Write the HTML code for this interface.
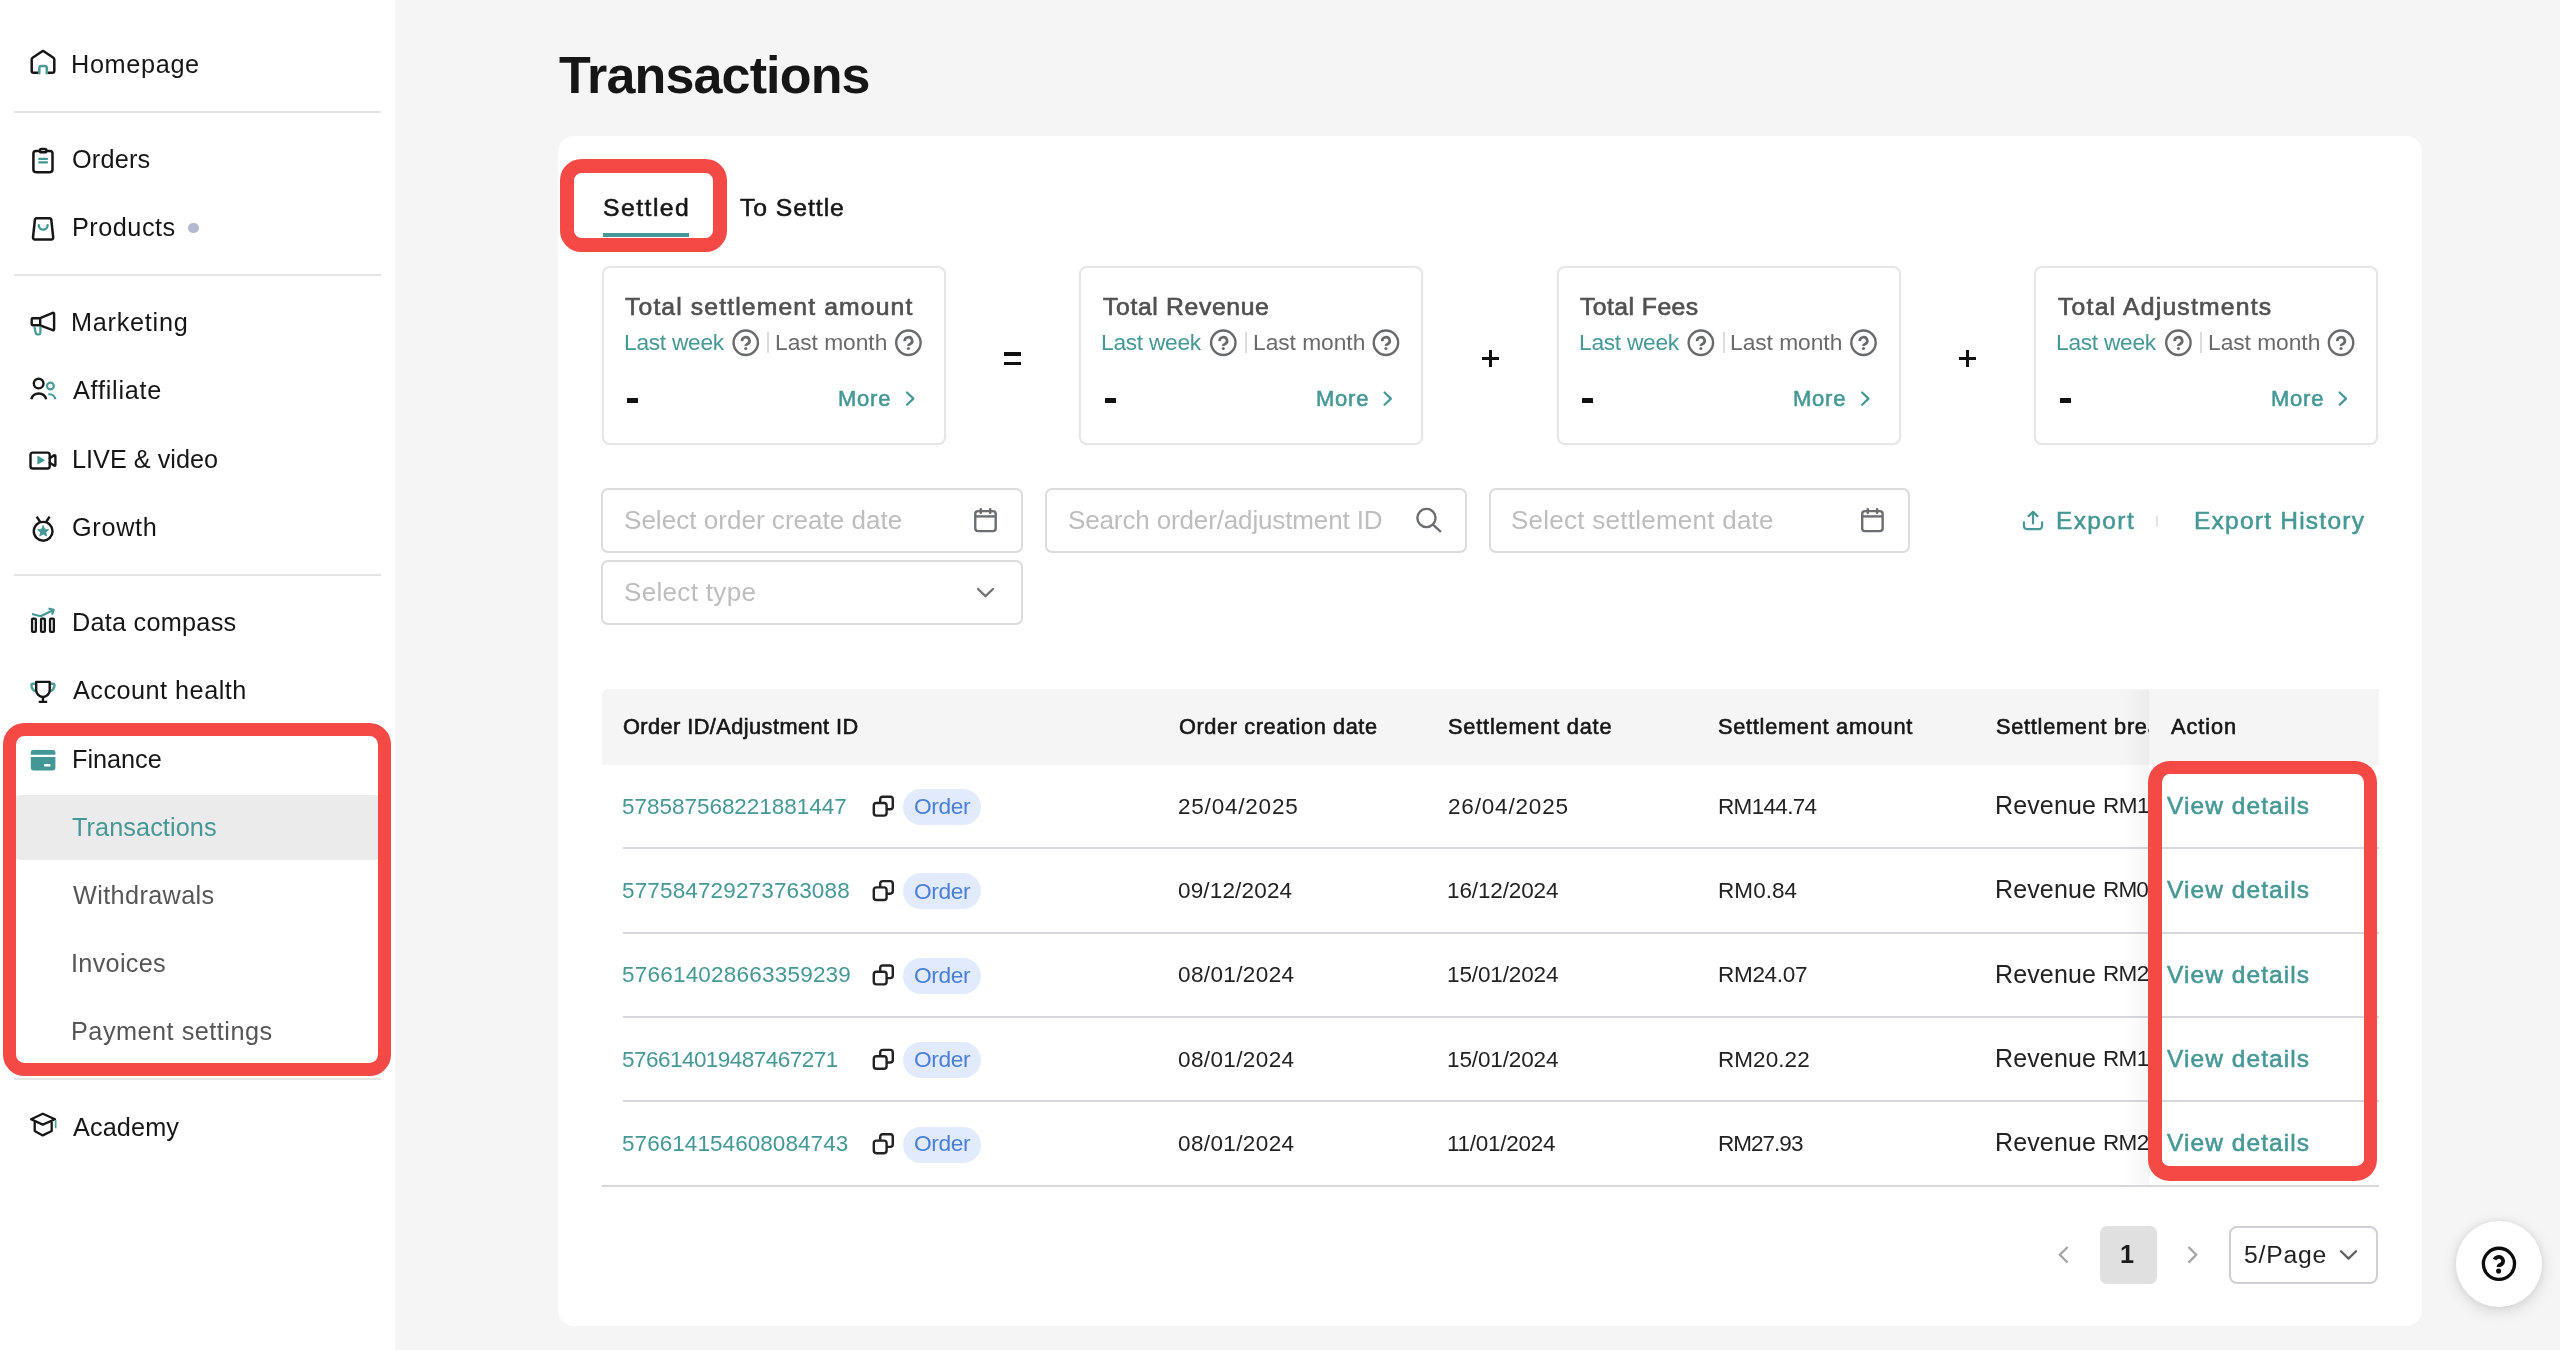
<!DOCTYPE html>
<html lang="en">
<head>
<meta charset="utf-8">
<title>Transactions</title>
<style>
*{box-sizing:border-box;margin:0;padding:0}
html,body{width:2560px;height:1350px;overflow:hidden;background:#f5f5f5}
body{position:relative;font-family:"Liberation Sans",sans-serif;color:#161616}
.a{position:absolute}
.t{position:absolute;white-space:nowrap;line-height:1;will-change:transform}
.hr{position:absolute;left:14.4px;width:366.2px;height:2px;background:#e5e5e6}
.stat{position:absolute;top:265.8px;width:344.2px;height:179.1px;border:2px solid #e6e6e6;border-radius:8px;background:#fff;box-shadow:0 0 3px rgba(0,0,0,.05)}
.inp{position:absolute;width:421.6px;height:65px;border:2px solid #dcdcdc;border-radius:7px;background:#fff}
.dash{position:absolute;top:398px;width:11px;height:5px;background:#111;border-radius:.5px}
.vsep{position:absolute;top:332.3px;width:2px;height:21.2px;background:#dcdcdc}
.rsep{position:absolute;left:623px;width:1755.6px;height:2px;background:#d6d8dc}
.badge{position:absolute;left:903px;width:78px;height:36px;border-radius:18px;background:#e2ebfd}
.red{position:absolute;border:13.7px solid #f54946;border-radius:21.5px}
.clip{position:absolute;overflow:hidden}
</style>
</head>
<body>
<!-- sidebar -->
<div class="a" style="left:0;top:0;width:395px;height:1350px;background:#fff"></div>
<div class="hr" style="top:111px"></div>
<div class="hr" style="top:274.4px"></div>
<div class="hr" style="top:574.2px"></div>
<div class="hr" style="top:1078.4px"></div>
<div class="a" style="left:14.4px;top:795.4px;width:366.2px;height:64.2px;background:#ebebeb;border-radius:6px"></div>
<div class="a" style="left:188.2px;top:222.6px;width:10.8px;height:10.8px;border-radius:50%;background:#b3b7d0"></div>

<!-- main card -->
<div class="a" style="left:557.8px;top:135.8px;width:1863.8px;height:1190.6px;background:#fff;border-radius:16px"></div>
<div class="a" style="left:603px;top:233.2px;width:86.4px;height:3.6px;background:#439794"></div>

<!-- stat cards -->
<div class="stat" style="left:601.5px"></div>
<div class="stat" style="left:1079.05px"></div>
<div class="stat" style="left:1556.6px"></div>
<div class="stat" style="left:2034.15px"></div>
<div class="vsep" style="left:767.40px"></div>
<div class="dash" style="left:627.00px"></div>
<div class="vsep" style="left:1244.95px"></div>
<div class="dash" style="left:1104.55px"></div>
<div class="vsep" style="left:1722.50px"></div>
<div class="dash" style="left:1582.10px"></div>
<div class="vsep" style="left:2200.05px"></div>
<div class="dash" style="left:2059.65px"></div>
<!-- operators -->
<div class="a" style="left:1004px;top:352.4px;width:17px;height:3.2px;background:#111"></div>
<div class="a" style="left:1004px;top:362px;width:17px;height:3.2px;background:#111"></div>
<div class="a" style="left:1482px;top:356.9px;width:16.8px;height:3.5px;background:#111"></div>
<div class="a" style="left:1488.55px;top:350.2px;width:3.5px;height:16.9px;background:#111"></div>
<div class="a" style="left:1959px;top:356.9px;width:16.8px;height:3.5px;background:#111"></div>
<div class="a" style="left:1965.55px;top:350.2px;width:3.5px;height:16.9px;background:#111"></div>

<!-- filters -->
<div class="inp" style="left:601.4px;top:488px"></div>
<div class="inp" style="left:1045.2px;top:488px"></div>
<div class="inp" style="left:1488.8px;top:488px"></div>
<div class="inp" style="left:601.4px;top:560.1px"></div>
<div class="a" style="left:2156.4px;top:515.6px;width:1.6px;height:10px;background:#e4e4e4"></div>

<!-- table -->
<div class="a" style="left:601.6px;top:688.8px;width:1777.2px;height:76.2px;background:#f5f5f5;border-radius:6px 0 0 0"></div>
<div class="rsep" style="top:847.2px"></div>
<div class="rsep" style="top:931.6px"></div>
<div class="rsep" style="top:1016px"></div>
<div class="rsep" style="top:1100.4px"></div>
<div class="rsep" style="top:1184.8px;left:601.6px;width:1777px"></div>
<div class="badge" style="top:789.00px"></div>
<div class="badge" style="top:873.40px"></div>
<div class="badge" style="top:957.80px"></div>
<div class="badge" style="top:1042.20px"></div>
<div class="badge" style="top:1126.60px"></div>
<!-- settlement breakdown column (clipped by fixed Action column) -->
<div class="clip" style="left:1990px;top:689.6px;width:158.6px;height:495px">
<div class="t" style="left:6.00px;top:26.10px;font-size:21.75px;letter-spacing:0.731px;color:#161616;-webkit-text-stroke:0.6px #161616">Settlement breakdown</div>
<div class="t" style="left:5.00px;top:103.40px;font-size:25.0px;letter-spacing:0.135px;color:#222">Revenue</div>
<div class="t" style="left:113.00px;top:105.30px;font-size:22.5px;letter-spacing:-0.528px;color:#222">RM160.82</div>
<div class="t" style="left:5.00px;top:187.70px;font-size:25.0px;letter-spacing:0.135px;color:#222">Revenue</div>
<div class="t" style="left:113.00px;top:189.60px;font-size:22.5px;letter-spacing:-0.814px;color:#222">RM0.93</div>
<div class="t" style="left:5.00px;top:272.00px;font-size:25.0px;letter-spacing:0.135px;color:#222">Revenue</div>
<div class="t" style="left:113.00px;top:273.90px;font-size:22.5px;letter-spacing:-0.647px;color:#222">RM26.74</div>
<div class="t" style="left:5.00px;top:356.30px;font-size:25.0px;letter-spacing:0.135px;color:#222">Revenue</div>
<div class="t" style="left:113.00px;top:358.20px;font-size:22.5px;letter-spacing:-0.647px;color:#222">RM16.04</div>
<div class="t" style="left:5.00px;top:440.60px;font-size:25.0px;letter-spacing:0.135px;color:#222">Revenue</div>
<div class="t" style="left:113.00px;top:442.50px;font-size:22.5px;letter-spacing:-0.647px;color:#222">RM23.10</div>
</div>
<div class="a" style="left:2124px;top:689.6px;width:24.6px;height:495.2px;background:linear-gradient(to right,rgba(0,0,0,0),rgba(0,0,0,.035))"></div>

<!-- pagination -->
<div class="a" style="left:2099.8px;top:1225.9px;width:57.2px;height:57.8px;border-radius:7px;background:#e0e0e0"></div>
<div class="a" style="left:2229px;top:1226.3px;width:149.2px;height:57.4px;border:2px solid #ced0d3;border-radius:8px;background:#fff"></div>

<!-- help button -->
<div class="a" style="left:2456px;top:1221px;width:85.6px;height:85.6px;border-radius:50%;background:#fff;box-shadow:0 4px 16px rgba(0,0,0,.13),0 0 6px rgba(0,0,0,.07)"></div>

<!-- icons -->
<svg class="a" style="left:0;top:0" width="2560" height="1350" viewBox="0 0 2560 1350" fill="none" stroke-linecap="round" stroke-linejoin="round">
<g stroke="#161616" stroke-width="2.5">
<!-- home -->
<path d="M38.2 72.800H33.500a1.800 1.800 0 0 1-1.800-1.800V59.400a2 2 0 0 1 .900-1.700L41.900 51.500a2 2 0 0 1 2.200 0L53.400 57.700a2 2 0 0 1 .900 1.700V71a1.800 1.800 0 0 1-1.800 1.800h-4.700"/>
<path d="M39.300 73.200V68.200a2.200 2.200 0 0 1 2.200-2.200h3.100a2.200 2.200 0 0 1 2.200 2.200v5" stroke="#4a9c99"/>
<!-- orders -->
<rect x="33.400" y="151" width="19.100" height="21.200" rx="2.600"/>
<rect x="39.900" y="148.900" width="6.500" height="3.400" rx="1.600" fill="#fff"/>
<path d="M39.300 158.900h7.700M39.300 162.400h7.700" stroke="#439794" stroke-width="2.200"/>
<!-- products -->
<path d="M36.900 218.250h12.600a1.800 1.800 0 0 1 1.800 1.600l1.900 17.500a1.850 1.850 0 0 1-1.850 2.050H34.850a1.850 1.850 0 0 1-1.850-2.050l1.900-17.500a1.800 1.800 0 0 1 1.800-1.600z"/>
<path d="M38.800 225.200a4.400 4.400 0 0 0 8.800 0" stroke="#439794" stroke-width="2.400"/>
<!-- marketing -->
<path d="M40.200 318.200L52.700 312.900a1 1 0 0 1 1.400 .900V329.300a1 1 0 0 1-1.400 .900L40.200 325.300" stroke-width="2.400"/>
<rect x="31.700" y="318.300" width="8.500" height="6.900" rx=".900" stroke-width="2.400"/>
<path d="M34.500 327.600l1.400 5.800a1.200 1.200 0 0 0 1.200 .900h2.100a1.200 1.200 0 0 0 1.200-1.200v-5.500" stroke="#4a9c99" stroke-width="2.300"/>
<!-- affiliate -->
<circle cx="38.650" cy="383.550" r="4.850" stroke-width="2.400"/>
<path d="M31.300 399.300a7.700 7.700 0 0 1 14.900 0" stroke-width="2.400" stroke-linecap="butt"/>
<circle cx="50.400" cy="386.050" r="3.400" stroke="#4a9c99" stroke-width="2.200"/>
<path d="M48.400 394.300a6.600 6.600 0 0 1 7.100 5" stroke="#4a9c99" stroke-width="2.200" stroke-linecap="butt"/>
<!-- live & video -->
<rect x="30.500" y="452.600" width="19.200" height="15.900" rx="2.300" stroke-width="2.400"/>
<path d="M49.700 458.200l4.400-2.900a.85.850 0 0 1 1.300.700v8.900a.85.850 0 0 1-1.300.700l-4.400-2.900" stroke-width="2.400"/>
<path d="M37.400 456.500a.5.500 0 0 1 .75-.43l6.300 3.700a.5.500 0 0 1 0 .860l-6.300 3.700a.5.500 0 0 1-.75-.43z" fill="#439794" stroke="none"/>
<!-- growth -->
<circle cx="43.150" cy="531.300" r="9.400" stroke-width="2.400"/>
<path d="M36.700 516.600l3.500 5.400M49.600 516.600l-3.500 5.400" stroke-width="2.400" stroke-linecap="butt"/>
<path d="M43.150 525.700l1.650 3.500 3.850.450-2.850 2.600.780 3.800-3.430-1.950-3.430 1.950.780-3.800-2.850-2.600 3.850-.450z" fill="#439794" stroke="#439794" stroke-width=".8"/>
<!-- data compass -->
<rect x="32.050" y="618.650" width="3.800" height="13.200" rx=".900" stroke-width="2.300"/>
<rect x="41.050" y="618.650" width="3.800" height="13.200" rx=".900" stroke-width="2.300"/>
<rect x="50.050" y="618.650" width="3.800" height="13.200" rx=".900" stroke-width="2.300"/>
<path d="M32 614l8.700 2.300 12.600-6.300M48.500 608.400l5.200 1.400-1.700 4.900" stroke="#439794" stroke-width="2.100" stroke-linecap="butt"/>
<!-- account health -->
<path d="M35.600 683.700h-2.800a1.400 1.400 0 0 0-1.400 1.500c.2 3.400 2 5.700 5 6.100M50.300 683.700h2.800a1.400 1.400 0 0 1 1.400 1.500c-.2 3.400-2 5.700-5 6.100" stroke="#4a9c99" stroke-width="2.400"/>
<path d="M36.200 681.900h13.500v8.300a6.750 6.750 0 0 1-13.500 0z" fill="#fff" stroke-width="2.400"/>
<path d="M42.950 697v4.500M38.700 701.900h8.500" stroke-width="2.400" stroke-linecap="butt"/>
<!-- academy -->
<path d="M42.800 1113.700l12.200 5.600-12.200 5.300-11.700-5.300z" stroke-width="2.300"/>
<path d="M34.700 1121.700v9.300l8.100 4.400 8.900-4.400v-9.300" stroke-width="2.300" stroke-linecap="butt"/>
<path d="M55.700 1120.300v8" stroke="#4a9c99" stroke-width="1.600" stroke-linecap="butt"/>
</g>
<!-- finance (filled) -->
<path d="M33.200 750h19.800a2.400 2.400 0 0 1 2.400 2.400v2.300H30.800v-2.300a2.400 2.400 0 0 1 2.400-2.400z" fill="#439794"/>
<path d="M30.800 757h24.600v11a2.400 2.400 0 0 1-2.400 2.400H33.200a2.400 2.400 0 0 1-2.400-2.400z" fill="#439794"/>
<rect x="44.200" y="763.900" width="6.200" height="2.700" rx=".6" fill="#fff"/>
<g transform="translate(745.75 342.75)" stroke="#686a6c" stroke-width="2.4"><circle r="12.2"/><g transform="scale(1.0)"><path d="M-3.7-1.7A3.75 3.6 0 1 1 1.7 1.3C.5 1.9-.1 2.3-.1 3.3" stroke-linecap="butt" stroke-width="2.69"/><circle cy="5.7" r="1.55" fill="#686a6c" stroke="none"/></g></g><g transform="translate(908.40 342.75)" stroke="#686a6c" stroke-width="2.4"><circle r="12.2"/><g transform="scale(1.0)"><path d="M-3.7-1.7A3.75 3.6 0 1 1 1.7 1.3C.5 1.9-.1 2.3-.1 3.3" stroke-linecap="butt" stroke-width="2.69"/><circle cy="5.7" r="1.55" fill="#686a6c" stroke="none"/></g></g><path d="M907.00 392.5l6.4 6.1-6.4 6.1" stroke="#459895" stroke-width="2.2"/><g transform="translate(1223.30 342.75)" stroke="#686a6c" stroke-width="2.4"><circle r="12.2"/><g transform="scale(1.0)"><path d="M-3.7-1.7A3.75 3.6 0 1 1 1.7 1.3C.5 1.9-.1 2.3-.1 3.3" stroke-linecap="butt" stroke-width="2.69"/><circle cy="5.7" r="1.55" fill="#686a6c" stroke="none"/></g></g><g transform="translate(1385.95 342.75)" stroke="#686a6c" stroke-width="2.4"><circle r="12.2"/><g transform="scale(1.0)"><path d="M-3.7-1.7A3.75 3.6 0 1 1 1.7 1.3C.5 1.9-.1 2.3-.1 3.3" stroke-linecap="butt" stroke-width="2.69"/><circle cy="5.7" r="1.55" fill="#686a6c" stroke="none"/></g></g><path d="M1384.55 392.5l6.4 6.1-6.4 6.1" stroke="#459895" stroke-width="2.2"/><g transform="translate(1700.85 342.75)" stroke="#686a6c" stroke-width="2.4"><circle r="12.2"/><g transform="scale(1.0)"><path d="M-3.7-1.7A3.75 3.6 0 1 1 1.7 1.3C.5 1.9-.1 2.3-.1 3.3" stroke-linecap="butt" stroke-width="2.69"/><circle cy="5.7" r="1.55" fill="#686a6c" stroke="none"/></g></g><g transform="translate(1863.50 342.75)" stroke="#686a6c" stroke-width="2.4"><circle r="12.2"/><g transform="scale(1.0)"><path d="M-3.7-1.7A3.75 3.6 0 1 1 1.7 1.3C.5 1.9-.1 2.3-.1 3.3" stroke-linecap="butt" stroke-width="2.69"/><circle cy="5.7" r="1.55" fill="#686a6c" stroke="none"/></g></g><path d="M1862.10 392.5l6.4 6.1-6.4 6.1" stroke="#459895" stroke-width="2.2"/><g transform="translate(2178.40 342.75)" stroke="#686a6c" stroke-width="2.4"><circle r="12.2"/><g transform="scale(1.0)"><path d="M-3.7-1.7A3.75 3.6 0 1 1 1.7 1.3C.5 1.9-.1 2.3-.1 3.3" stroke-linecap="butt" stroke-width="2.69"/><circle cy="5.7" r="1.55" fill="#686a6c" stroke="none"/></g></g><g transform="translate(2341.05 342.75)" stroke="#686a6c" stroke-width="2.4"><circle r="12.2"/><g transform="scale(1.0)"><path d="M-3.7-1.7A3.75 3.6 0 1 1 1.7 1.3C.5 1.9-.1 2.3-.1 3.3" stroke-linecap="butt" stroke-width="2.69"/><circle cy="5.7" r="1.55" fill="#686a6c" stroke="none"/></g></g><path d="M2339.65 392.5l6.4 6.1-6.4 6.1" stroke="#459895" stroke-width="2.2"/><g stroke="#6b6e71" stroke-width="2.4"><rect x="975.25" y="511.1" width="20.45" height="20" rx="2.8"/><path d="M975.25 516.4h20.45" stroke-linecap="butt"/><path d="M980.8 509.3v3.5M990.2 509.3v3.5" stroke-width="2.6"/></g><g stroke="#6b6e71" stroke-width="2.4"><rect x="1862.2" y="511.1" width="20.45" height="20" rx="2.8"/><path d="M1862.2 516.4h20.45" stroke-linecap="butt"/><path d="M1867.75 509.3v3.5M1877.15 509.3v3.5" stroke-width="2.6"/></g><g stroke="#6b6e71" stroke-width="2.35"><circle cx="1426.45" cy="518" r="9.1"/><path d="M1433 524.7l7.3 6.6"/></g><path d="M978 589l7.5 7.100 7.500-7.100" stroke="#707274" stroke-width="2.3"/><g stroke="#459895" stroke-width="2.2"><path d="M2023.95 522.3v3.800a3 3 0 0 0 3 3h12.100a3 3 0 0 0 3-3v-3.800"/><path d="M2033 523.500v-11.400M2028.600 516.100l4.400-4.300 4.400 4.300"/></g><g stroke="#222" stroke-width="2.4"><rect x="880.2" y="796.70" width="12.6" height="12.6" rx="2.6"/><rect x="873.8" y="803.00" width="12.8" height="12.6" rx="2.6" fill="#fff"/></g><g stroke="#222" stroke-width="2.4"><rect x="880.2" y="881.10" width="12.6" height="12.6" rx="2.6"/><rect x="873.8" y="887.40" width="12.8" height="12.6" rx="2.6" fill="#fff"/></g><g stroke="#222" stroke-width="2.4"><rect x="880.2" y="965.50" width="12.6" height="12.6" rx="2.6"/><rect x="873.8" y="971.80" width="12.8" height="12.6" rx="2.6" fill="#fff"/></g><g stroke="#222" stroke-width="2.4"><rect x="880.2" y="1049.90" width="12.6" height="12.6" rx="2.6"/><rect x="873.8" y="1056.20" width="12.8" height="12.6" rx="2.6" fill="#fff"/></g><g stroke="#222" stroke-width="2.4"><rect x="880.2" y="1134.30" width="12.6" height="12.6" rx="2.6"/><rect x="873.8" y="1140.60" width="12.8" height="12.6" rx="2.6" fill="#fff"/></g><path d="M2067.6 1247l-7.700 7.800 7.700 7.800" stroke="#a2a4a7" stroke-width="2.3" stroke-linecap="butt" stroke-linejoin="miter"/><path d="M2188.5 1247l7.700 7.800-7.700 7.800" stroke="#a2a4a7" stroke-width="2.3" stroke-linecap="butt" stroke-linejoin="miter"/><path d="M2341 1251.200l7.5 7.400 7.5-7.400" stroke="#606060" stroke-width="2.3"/><g transform="translate(2498.95 1263.85)" stroke="#0c0c0c"><circle r="15.6" stroke-width="3.3"/><path d="M-4.35-4.4A4.45 4.1 0 1 1 2.4.45C.6 1.3-.35 1.6-.35 3.15" stroke-width="3.9" stroke-linecap="butt"/><circle cx="-.35" cy="7.15" r="2.55" fill="#0c0c0c" stroke="none"/></g>
</svg>

<!-- text -->
<div class="t" style="left:71.00px;top:51.70px;font-size:25.25px;letter-spacing:0.662px;color:#161616">Homepage</div>
<div class="t" style="left:72.00px;top:146.90px;font-size:25.25px;letter-spacing:0.202px;color:#161616">Orders</div>
<div class="t" style="left:71.60px;top:215.30px;font-size:25.25px;letter-spacing:0.503px;color:#161616">Products</div>
<div class="t" style="left:71.00px;top:309.90px;font-size:25.25px;letter-spacing:0.738px;color:#161616">Marketing</div>
<div class="t" style="left:73.00px;top:378.30px;font-size:25.25px;letter-spacing:0.753px;color:#161616">Affiliate</div>
<div class="t" style="left:71.60px;top:446.70px;font-size:25.25px;letter-spacing:0.004px;color:#161616">LIVE &amp; video</div>
<div class="t" style="left:72.00px;top:515.30px;font-size:25.25px;letter-spacing:0.699px;color:#161616">Growth</div>
<div class="t" style="left:71.60px;top:610.30px;font-size:25.25px;letter-spacing:0.253px;color:#161616">Data compass</div>
<div class="t" style="left:73.00px;top:678.30px;font-size:25.25px;letter-spacing:0.481px;color:#161616">Account health</div>
<div class="t" style="left:71.60px;top:746.70px;font-size:25.25px;letter-spacing:-0.021px;color:#161616">Finance</div>
<div class="t" style="left:72.00px;top:814.90px;font-size:25.25px;letter-spacing:0.081px;color:#459895">Transactions</div>
<div class="t" style="left:73.00px;top:882.90px;font-size:25.25px;letter-spacing:0.367px;color:#565656">Withdrawals</div>
<div class="t" style="left:70.60px;top:951.30px;font-size:25.25px;letter-spacing:0.301px;color:#565656">Invoices</div>
<div class="t" style="left:71.00px;top:1019.30px;font-size:25.25px;letter-spacing:0.499px;color:#565656">Payment settings</div>
<div class="t" style="left:73.00px;top:1114.90px;font-size:25.25px;letter-spacing:0.110px;color:#161616">Academy</div>
<div class="t" style="left:558.80px;top:49.30px;font-size:52.0px;letter-spacing:-0.846px;color:#161616;font-weight:700">Transactions</div>
<div class="t" style="left:603.20px;top:196.20px;font-size:24.75px;letter-spacing:1.468px;color:#161616;-webkit-text-stroke:0.55px #161616">Settled</div>
<div class="t" style="left:740.20px;top:196.20px;font-size:24.75px;letter-spacing:0.944px;color:#161616;-webkit-text-stroke:0.55px #161616">To Settle</div>
<div class="t" style="left:624.60px;top:295.30px;font-size:24.75px;letter-spacing:1.118px;color:#505050;-webkit-text-stroke:0.65px #505050">Total settlement amount</div>
<div class="t" style="left:623.60px;top:331.30px;font-size:22.75px;letter-spacing:-0.276px;color:#459895">Last week</div>
<div class="t" style="left:775.00px;top:331.30px;font-size:22.75px;letter-spacing:-0.026px;color:#6a6a6a">Last month</div>
<div class="t" style="left:838.40px;top:387.90px;font-size:22.0px;letter-spacing:0.762px;color:#459895;-webkit-text-stroke:0.55px #459895">More</div>
<div class="t" style="left:1102.60px;top:295.30px;font-size:24.75px;letter-spacing:0.638px;color:#505050;-webkit-text-stroke:0.65px #505050">Total Revenue</div>
<div class="t" style="left:1101.15px;top:331.30px;font-size:22.75px;letter-spacing:-0.276px;color:#459895">Last week</div>
<div class="t" style="left:1252.55px;top:331.30px;font-size:22.75px;letter-spacing:-0.026px;color:#6a6a6a">Last month</div>
<div class="t" style="left:1315.95px;top:387.90px;font-size:22.0px;letter-spacing:0.762px;color:#459895;-webkit-text-stroke:0.55px #459895">More</div>
<div class="t" style="left:1579.60px;top:295.30px;font-size:24.75px;letter-spacing:0.446px;color:#505050;-webkit-text-stroke:0.65px #505050">Total Fees</div>
<div class="t" style="left:1578.70px;top:331.30px;font-size:22.75px;letter-spacing:-0.276px;color:#459895">Last week</div>
<div class="t" style="left:1730.10px;top:331.30px;font-size:22.75px;letter-spacing:-0.026px;color:#6a6a6a">Last month</div>
<div class="t" style="left:1792.50px;top:387.90px;font-size:22.0px;letter-spacing:0.762px;color:#459895;-webkit-text-stroke:0.55px #459895">More</div>
<div class="t" style="left:2058.00px;top:295.30px;font-size:24.75px;letter-spacing:1.204px;color:#505050;-webkit-text-stroke:0.65px #505050">Total Adjustments</div>
<div class="t" style="left:2056.25px;top:331.30px;font-size:22.75px;letter-spacing:-0.276px;color:#459895">Last week</div>
<div class="t" style="left:2207.65px;top:331.30px;font-size:22.75px;letter-spacing:-0.026px;color:#6a6a6a">Last month</div>
<div class="t" style="left:2271.05px;top:387.90px;font-size:22.0px;letter-spacing:0.762px;color:#459895;-webkit-text-stroke:0.55px #459895">More</div>
<div class="t" style="left:624.00px;top:507.30px;font-size:26.0px;letter-spacing:0.035px;color:#bdbdbd">Select order create date</div>
<div class="t" style="left:1068.40px;top:507.30px;font-size:26.0px;letter-spacing:-0.136px;color:#bdbdbd">Search order/adjustment ID</div>
<div class="t" style="left:1510.60px;top:507.30px;font-size:26.0px;letter-spacing:0.252px;color:#bdbdbd">Select settlement date</div>
<div class="t" style="left:624.00px;top:578.90px;font-size:26.0px;letter-spacing:0.332px;color:#bdbdbd">Select type</div>
<div class="t" style="left:2056.00px;top:509.30px;font-size:24.5px;letter-spacing:1.382px;color:#459895;-webkit-text-stroke:0.55px #459895">Export</div>
<div class="t" style="left:2194.40px;top:509.30px;font-size:24.5px;letter-spacing:1.234px;color:#459895;-webkit-text-stroke:0.55px #459895">Export History</div>
<div class="t" style="left:623.00px;top:715.70px;font-size:21.75px;letter-spacing:0.433px;color:#161616;-webkit-text-stroke:0.6px #161616">Order ID/Adjustment ID</div>
<div class="t" style="left:1179.40px;top:715.70px;font-size:21.75px;letter-spacing:0.593px;color:#161616;-webkit-text-stroke:0.6px #161616">Order creation date</div>
<div class="t" style="left:1448.00px;top:715.70px;font-size:21.75px;letter-spacing:0.801px;color:#161616;-webkit-text-stroke:0.6px #161616">Settlement date</div>
<div class="t" style="left:1718.00px;top:715.70px;font-size:21.75px;letter-spacing:0.731px;color:#161616;-webkit-text-stroke:0.6px #161616">Settlement amount</div>
<div class="t" style="left:2171.00px;top:715.70px;font-size:21.75px;letter-spacing:0.928px;color:#161616;-webkit-text-stroke:0.6px #161616">Action</div>
<div class="t" style="left:621.60px;top:795.70px;font-size:22.5px;letter-spacing:-0.029px;color:#459895">578587568221881447</div>
<div class="t" style="left:913.90px;top:795.20px;font-size:22.75px;letter-spacing:-0.410px;color:#4b7fd8">Order</div>
<div class="t" style="left:1178.40px;top:795.70px;font-size:22.5px;letter-spacing:0.792px;color:#222">25/04/2025</div>
<div class="t" style="left:1448.00px;top:795.70px;font-size:22.5px;letter-spacing:0.829px;color:#222">26/04/2025</div>
<div class="t" style="left:1718.40px;top:795.70px;font-size:22.5px;letter-spacing:-0.670px;color:#222">RM144.74</div>
<div class="t" style="left:2167.40px;top:794.30px;font-size:24.5px;letter-spacing:1.065px;color:#459895;-webkit-text-stroke:0.55px #459895">View details</div>
<div class="t" style="left:621.60px;top:880.00px;font-size:22.5px;letter-spacing:0.144px;color:#459895">577584729273763088</div>
<div class="t" style="left:913.90px;top:879.50px;font-size:22.75px;letter-spacing:-0.410px;color:#4b7fd8">Order</div>
<div class="t" style="left:1178.40px;top:880.00px;font-size:22.5px;letter-spacing:0.162px;color:#222">09/12/2024</div>
<div class="t" style="left:1447.00px;top:880.00px;font-size:22.5px;letter-spacing:-0.132px;color:#222">16/12/2024</div>
<div class="t" style="left:1718.40px;top:880.00px;font-size:22.5px;letter-spacing:0.068px;color:#222">RM0.84</div>
<div class="t" style="left:2167.40px;top:877.60px;font-size:24.5px;letter-spacing:1.065px;color:#459895;-webkit-text-stroke:0.55px #459895">View details</div>
<div class="t" style="left:621.60px;top:964.30px;font-size:22.5px;letter-spacing:0.212px;color:#459895">576614028663359239</div>
<div class="t" style="left:913.90px;top:963.80px;font-size:22.75px;letter-spacing:-0.410px;color:#4b7fd8">Order</div>
<div class="t" style="left:1178.40px;top:964.30px;font-size:22.5px;letter-spacing:0.384px;color:#222">08/01/2024</div>
<div class="t" style="left:1447.00px;top:964.30px;font-size:22.5px;letter-spacing:-0.132px;color:#222">15/01/2024</div>
<div class="t" style="left:1718.40px;top:964.30px;font-size:22.5px;letter-spacing:-0.299px;color:#222">RM24.07</div>
<div class="t" style="left:2167.40px;top:962.90px;font-size:24.5px;letter-spacing:1.065px;color:#459895;-webkit-text-stroke:0.55px #459895">View details</div>
<div class="t" style="left:621.60px;top:1048.60px;font-size:22.5px;letter-spacing:-0.533px;color:#459895">576614019487467271</div>
<div class="t" style="left:913.90px;top:1048.10px;font-size:22.75px;letter-spacing:-0.410px;color:#4b7fd8">Order</div>
<div class="t" style="left:1178.40px;top:1048.60px;font-size:22.5px;letter-spacing:0.384px;color:#222">08/01/2024</div>
<div class="t" style="left:1447.00px;top:1048.60px;font-size:22.5px;letter-spacing:-0.132px;color:#222">15/01/2024</div>
<div class="t" style="left:1718.40px;top:1048.60px;font-size:22.5px;letter-spacing:0.066px;color:#222">RM20.22</div>
<div class="t" style="left:2167.40px;top:1047.20px;font-size:24.5px;letter-spacing:1.065px;color:#459895;-webkit-text-stroke:0.55px #459895">View details</div>
<div class="t" style="left:621.60px;top:1132.90px;font-size:22.5px;letter-spacing:0.058px;color:#459895">576614154608084743</div>
<div class="t" style="left:913.90px;top:1132.40px;font-size:22.75px;letter-spacing:-0.410px;color:#4b7fd8">Order</div>
<div class="t" style="left:1178.40px;top:1132.90px;font-size:22.5px;letter-spacing:0.384px;color:#222">08/01/2024</div>
<div class="t" style="left:1447.00px;top:1132.90px;font-size:22.5px;letter-spacing:-0.280px;color:#222">11/01/2024</div>
<div class="t" style="left:1718.40px;top:1132.90px;font-size:22.5px;letter-spacing:-0.979px;color:#222">RM27.93</div>
<div class="t" style="left:2167.40px;top:1130.50px;font-size:24.5px;letter-spacing:1.065px;color:#459895;-webkit-text-stroke:0.55px #459895">View details</div>
<div class="t" style="left:2243.60px;top:1243.30px;font-size:24.75px;letter-spacing:0.776px;color:#222">5/Page</div>
<div class="t" style="left:2119.80px;top:1242.00px;font-size:25.25px;letter-spacing:0.000px;color:#1c1c1c;font-weight:700">1</div>

<!-- annotation boxes -->
<div class="red" style="left:3px;top:722.7px;width:388px;height:353px"></div>
<div class="red" style="left:560.2px;top:158.6px;width:166.6px;height:93.8px;border-width:14.8px 14.7px 14.1px 14.3px"></div>
<div class="red" style="left:2148.2px;top:761px;width:228.9px;height:419.9px;border-width:13.5px 13.6px 15px 14.1px"></div>
</body>
</html>
